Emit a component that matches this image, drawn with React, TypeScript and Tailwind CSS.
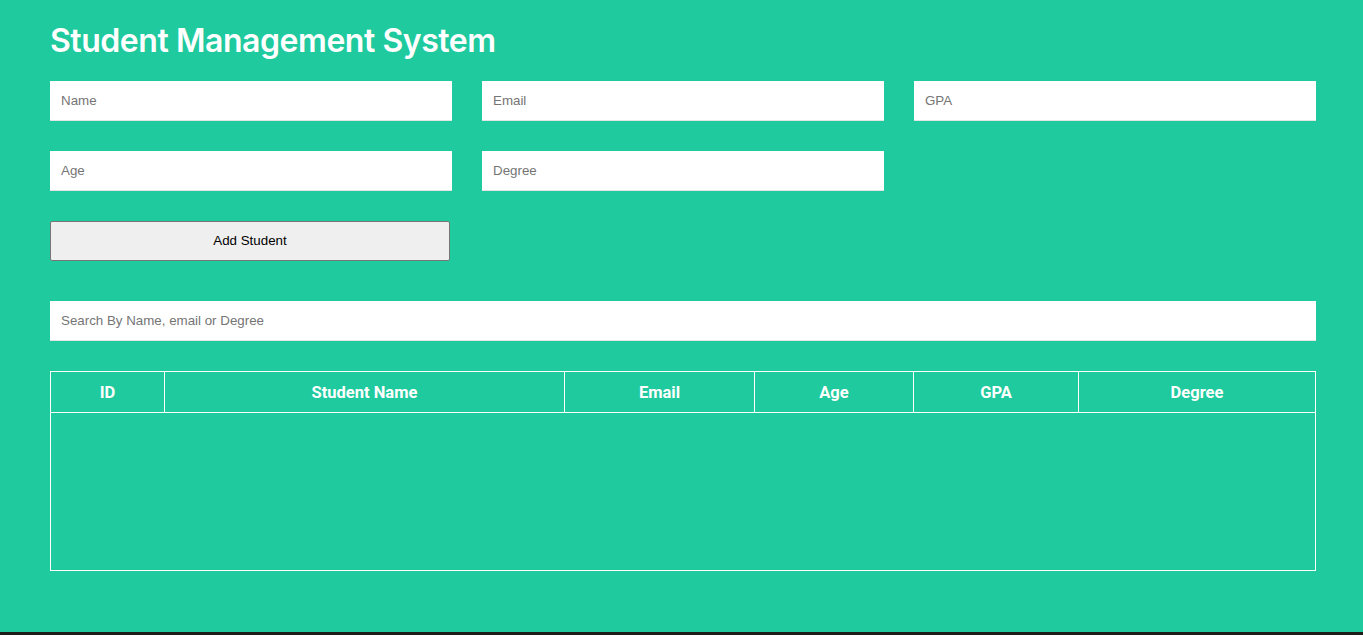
import { useMemo, useState } from "react";

type Student = {
  id: number;
  name: string;
  email: string;
  age: string;
  gpa: string;
  degree: string;
};

const columns = [
  { label: "ID", width: "w-[114px]" },
  { label: "Student Name", width: "w-[400px]" },
  { label: "Email", width: "w-[190px]" },
  { label: "Age", width: "w-[159px]" },
  { label: "GPA", width: "w-[165px]" },
  { label: "Degree", width: "flex-1" }
];

const inputClass =
  "h-10 w-full border-0 border-b border-[#e4e4e4] bg-white px-[11px] text-[13.33px] text-black outline-none placeholder:text-[#757575]";

export default function App() {
  const [form, setForm] = useState({ name: "", email: "", gpa: "", age: "", degree: "" });
  const [students, setStudents] = useState<Student[]>([]);
  const [search, setSearch] = useState("");

  const filtered = useMemo(() => {
    const q = search.toLowerCase();
    return students.filter(
      (s) =>
        s.name.toLowerCase().includes(q) ||
        s.email.toLowerCase().includes(q) ||
        s.degree.toLowerCase().includes(q)
    );
  }, [students, search]);

  function update(key: keyof typeof form, value: string) {
    setForm((current) => ({ ...current, [key]: value }));
  }

  function addStudent() {
    if (!form.name) return;
    setStudents((current) => [...current, { id: current.length + 1, ...form }]);
    setForm({ name: "", email: "", gpa: "", age: "", degree: "" });
  }

  return (
    <div className="min-h-screen bg-[#1e1d19] font-['Liberation_Sans',Arial,sans-serif]">
      <div className="bg-[#1fca9e] pb-[61px] pt-[22px]">
        <div className="ml-[50px] w-[1266px]">
          <h1 className="mb-[21px] font-['Inter',sans-serif] text-[32px] font-semibold leading-[38px] tracking-[-0.45px] text-white">
            Student Management System
          </h1>

          <div className="grid grid-cols-3 gap-[30px]">
            <input
              className={inputClass}
              placeholder="Name"
              value={form.name}
              onChange={(e) => update("name", e.target.value)}
            />
            <input
              className={inputClass}
              placeholder="Email"
              value={form.email}
              onChange={(e) => update("email", e.target.value)}
            />
            <input
              className={inputClass}
              placeholder="GPA"
              value={form.gpa}
              onChange={(e) => update("gpa", e.target.value)}
            />
            <input
              className={inputClass}
              placeholder="Age"
              value={form.age}
              onChange={(e) => update("age", e.target.value)}
            />
            <input
              className={inputClass}
              placeholder="Degree"
              value={form.degree}
              onChange={(e) => update("degree", e.target.value)}
            />
          </div>

          <button
            onClick={addStudent}
            className="mt-[30px] h-10 w-[400px] rounded-[2px] border border-[#767676] bg-[#efefef] text-[13.33px] text-black"
          >
            Add Student
          </button>

          <input
            className={`${inputClass} mt-10`}
            placeholder="Search By Name, email or Degree"
            value={search}
            onChange={(e) => setSearch(e.target.value)}
          />

          <div className="mt-[30px] h-[200px] border border-white font-['Roboto',sans-serif] text-white">
            <div className="flex h-[41px] border-b border-white">
              {columns.map((col, i) => (
                <div
                  key={col.label}
                  className={`${col.width} flex items-center justify-center pt-[2px] text-[16.5px] font-bold ${
                    i < columns.length - 1 ? "border-r border-white" : ""
                  }`}
                >
                  {col.label}
                </div>
              ))}
            </div>
            {filtered.map((s) => (
              <div key={s.id} className="flex h-10 border-b border-white text-[14px]">
                <div className="flex w-[114px] items-center justify-center border-r border-white">{s.id}</div>
                <div className="flex w-[400px] items-center justify-center border-r border-white">{s.name}</div>
                <div className="flex w-[190px] items-center justify-center border-r border-white">{s.email}</div>
                <div className="flex w-[159px] items-center justify-center border-r border-white">{s.age}</div>
                <div className="flex w-[165px] items-center justify-center border-r border-white">{s.gpa}</div>
                <div className="flex flex-1 items-center justify-center">{s.degree}</div>
              </div>
            ))}
          </div>
        </div>
      </div>
    </div>
  );
}
